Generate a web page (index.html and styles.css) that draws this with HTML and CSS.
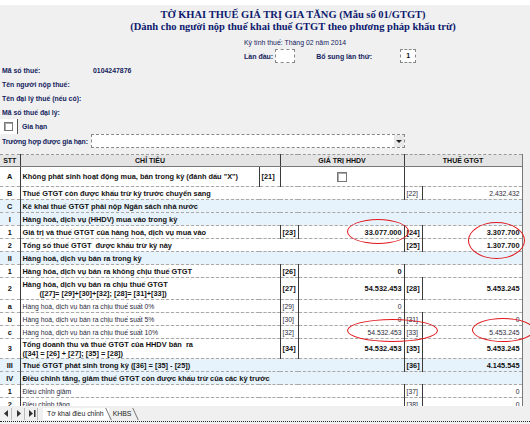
FILE: index.html
```html
<!DOCTYPE html>
<html lang="vi">
<head>
    <meta charset="UTF-8">
    <title>Tờ khai thuế GTGT</title>
    <link rel="stylesheet" href="styles.css">
</head>
<body>

<div class="sheet">
    <div class="topbar"></div>

    <div class="title">
        <div>TỜ KHAI THUẾ GIÁ TRỊ GIA TĂNG (Mẫu số 01/GTGT)</div>
        <div>(Dành cho người nộp thuế khai thuế GTGT theo phương pháp khấu trừ)</div>
    </div>

    <div class="period">Kỳ tính thuế: Tháng 02 năm 2014</div>
    <div class="times">
        <span class="lbl">Lần đầu:</span>
        <span class="box"></span>
        <span class="lbl extra">Bổ sung lần thứ:</span>
        <span class="box num">1</span>
    </div>

    <!-- thong tin nguoi nop thue -->
    <div class="info">
        <div class="line"><span class="key">Mã số thuế:</span><span class="val">0104247876</span></div>
        <div class="line"><span class="key">Tên người nộp thuế:</span></div>
        <div class="line"><span class="key">Tên đại lý thuế (nếu có):</span></div>
        <div class="line"><span class="key">Mã số thuế đại lý:</span></div>
        <div class="line chk-line"><span class="chk-wrap"><span class="chk"></span></span><span class="key">Gia hạn</span></div>
        <div class="line"><span class="key">Trường hợp được gia hạn:</span>
            <span class="select"><span class="arrow"></span></span>
        </div>
    </div>

    <table class="grid">
        <colgroup>
            <col style="width:20px">
            <col style="width:239px">
            <col style="width:21px">
            <col style="width:18px">
            <col style="width:106px">
            <col style="width:18px">
            <col style="width:100px">
        </colgroup>
        <tr class="hdr">
            <th>STT</th>
            <th colspan="2">CHỈ TIÊU</th>
            <th colspan="2">GIÁ TRỊ HHDV</th>
            <th colspan="2">THUẾ GTGT</th>
        </tr>
        <tr class="r ra">
            <td class="stt">A</td>
            <td>Không phát sinh hoạt động mua, bán trong kỳ (đánh dấu "X")</td>
            <td class="code">[21]</td>
            <td colspan="2" class="mid"><span class="chk"></span></td>
            <td colspan="2"></td>
        </tr>
        <tr class="r">
            <td class="stt">B</td>
            <td colspan="4">Thuế GTGT còn được khấu trừ kỳ trước chuyển sang</td>
            <td class="code light">[22]</td>
            <td class="num light">2.432.432</td>
        </tr>
        <tr class="r blue">
            <td class="stt">C</td>
            <td colspan="6">Kê khai thuế GTGT phải nộp Ngân sách nhà nước</td>
        </tr>
        <tr class="r blue">
            <td class="stt">I</td>
            <td colspan="6">Hàng hoá, dịch vụ (HHDV) mua vào trong kỳ</td>
        </tr>
        <tr class="r">
            <td class="stt">1</td>
            <td colspan="2">Giá trị và thuế GTGT của hàng hoá, dịch vụ mua vào</td>
            <td class="code">[23]</td>
            <td class="num">33.077.000</td>
            <td class="code">[24]</td>
            <td class="num">3.307.700</td>
        </tr>
        <tr class="r">
            <td class="stt">2</td>
            <td colspan="4">Tổng số thuế GTGT&nbsp; được khấu trừ kỳ này</td>
            <td class="code">[25]</td>
            <td class="num">1.307.700</td>
        </tr>
        <tr class="r blue">
            <td class="stt">II</td>
            <td colspan="6">Hàng hoá, dịch vụ bán ra trong kỳ</td>
        </tr>
        <tr class="r">
            <td class="stt">1</td>
            <td colspan="2">Hàng hóa, dịch vụ bán ra không chịu thuế GTGT</td>
            <td class="code">[26]</td>
            <td class="num">0</td>
            <td colspan="2"></td>
        </tr>
        <tr class="r r2">
            <td class="stt">2</td>
            <td colspan="2">Hàng hóa, dịch vụ bán ra chịu thuế GTGT<br><span class="indent">([27]= [29]+[30]+[32]; [28]= [31]+[33])</span></td>
            <td class="code">[27]</td>
            <td class="num">54.532.453</td>
            <td class="code">[28]</td>
            <td class="num">5.453.245</td>
        </tr>
        <tr class="r thin">
            <td class="stt">a</td>
            <td colspan="2">Hàng hoá, dịch vụ bán ra chịu thuế suất 0%</td>
            <td class="code">[29]</td>
            <td class="num">0</td>
            <td colspan="2"></td>
        </tr>
        <tr class="r thin">
            <td class="stt">b</td>
            <td colspan="2">Hàng hoá, dịch vụ bán ra chịu thuế suất 5%</td>
            <td class="code">[30]</td>
            <td class="num">0</td>
            <td class="code">[31]</td>
            <td class="num">0</td>
        </tr>
        <tr class="r thin">
            <td class="stt">c</td>
            <td colspan="2">Hàng hoá, dịch vụ bán ra chịu thuế suất 10%</td>
            <td class="code">[32]</td>
            <td class="num">54.532.453</td>
            <td class="code">[33]</td>
            <td class="num">5.453.245</td>
        </tr>
        <tr class="r r3">
            <td class="stt">3</td>
            <td colspan="2">Tổng doanh thu và thuế GTGT của HHDV bán&nbsp; ra<br>([34] = [26] + [27]; [35] = [28])</td>
            <td class="code">[34]</td>
            <td class="num">54.532.453</td>
            <td class="code">[35]</td>
            <td class="num">5.453.245</td>
        </tr>
        <tr class="r blue">
            <td class="stt">III</td>
            <td colspan="4">Thuế GTGT phát sinh trong kỳ ([36] = [35] - [25])</td>
            <td class="code">[36]</td>
            <td class="num">4.145.545</td>
        </tr>
        <tr class="r blue">
            <td class="stt">IV</td>
            <td colspan="6">Điều chỉnh tăng, giảm thuế GTGT còn được khấu trừ của các kỳ trước</td>
        </tr>
        <tr class="r thin">
            <td class="stt">1</td>
            <td colspan="4">Điều chỉnh giảm</td>
            <td class="code">[37]</td>
            <td class="num">0</td>
        </tr>
        <tr class="r thin">
            <td class="stt">2</td>
            <td colspan="4">Điều chỉnh tăng</td>
            <td class="code">[38]</td>
            <td class="num">0</td>
        </tr>
    </table>
</div>

<!-- sheet tabs -->
<div class="tabs">
    <span class="nav">
        <svg width="6" height="7" viewBox="0 0 6 7"><path d="M5 0 L5 7 L1 3.5 Z" fill="#333"/></svg>
    </span>
    <span class="nav">
        <svg width="6" height="7" viewBox="0 0 6 7"><path d="M1 0 L1 7 L5 3.5 Z" fill="#333"/></svg>
    </span>
    <span class="nav">
        <svg width="8" height="7" viewBox="0 0 8 7"><path d="M1 0 L1 7 L5 3.5 Z" fill="#333"/><rect x="6" y="0" width="1.5" height="7" fill="#333"/></svg>
    </span>
    <span class="tab active">Tờ khai điều chỉnh</span>
    <span class="tab">KHBS</span>
</div>

<!-- red marks -->
<div class="mark m1"></div>
<div class="mark m2"></div>
<div class="mark m3"></div>
<div class="mark m4"></div>

</body>
</html>
```

FILE: styles.css
```css
body {
    margin: 0;
    width: 530px;
    height: 424px;
    overflow: hidden;
    position: relative;
    background-color: #f0f0f0;
    font-family: 'Liberation Sans', Arial, sans-serif;
    font-size: 7.4px;
    color: #14235e;
}

.sheet {
    height: 406px;
    overflow: hidden;
}

.topbar {
    height: 5px;
    background-color: #fff;
}

.title {
    margin-top: 4px;
    padding-left: 56px;
    text-align: center;
    font-family: 'Liberation Serif', 'Times New Roman', serif;
    font-weight: bold;
    font-size: 10.5px;
    line-height: 12px;
    color: #0d1a6e;
}

.period {
    margin-top: 4px;
    padding-left: 244px;
    line-height: 12px;
    font-size: 6.9px;
}

.times {
    display: flex;
    align-items: center;
    height: 14px;
    padding-left: 244px;
    font-weight: bold;
    font-size: 7px;
}

.times .lbl {
    white-space: nowrap;
}

.times .extra {
    margin-left: 21px;
    width: 82px;
}

.box {
    display: inline-block;
    width: 18px;
    height: 12px;
    margin-left: 2px;
    border: 1px dashed #888;
    background-color: #fff;
    text-align: center;
    line-height: 12px;
    color: #111;
}

.box.num {
    width: 14px;
}

.info .line {
    display: flex;
    align-items: center;
    height: 14px;
    padding-left: 2px;
    font-weight: bold;
    font-size: 6.9px;
    white-space: nowrap;
}

.info .key {
    width: 91px;
}

.info .line:last-child .key {
    width: 89px;
    letter-spacing: -0.1px;
}

.chk-line {
    height: 15px !important;
    padding-left: 0 !important;
}

.chk-line .key {
    margin-left: 4px;
}

.chk-wrap {
    display: inline-flex;
    align-items: center;
    justify-content: center;
    width: 17px;
    height: 15px;
    background-color: #fff;
    border-right: 1px solid #555;
}

.chk {
    display: inline-block;
    width: 7px;
    height: 7px;
    border: 1px solid #777;
    background-color: #fff;
    box-shadow: inset 1px 1px 0 #aaa;
}

.select {
    position: relative;
    width: 312px;
    height: 12px;
    border: 1px dashed #888;
    background-color: #fff;
}

.select .arrow {
    position: absolute;
    right: 0;
    top: 0;
    width: 10px;
    height: 12px;
    background-color: #e8e8e8;
}

.select .arrow::after {
    content: "";
    position: absolute;
    left: 2px;
    top: 5px;
    border-left: 3px solid transparent;
    border-right: 3px solid transparent;
    border-top: 3px solid #222;
}

/* bang chi tieu */
.grid {
    margin-top: 6px;
    width: 522px;
    table-layout: fixed;
    border-collapse: collapse;
    color: #111;
    font-weight: bold;
}

.grid th,
.grid td {
    padding: 0 2px;
    border-left: 1px solid #3a3a3a;
    border-bottom: 1px dashed #a8a8a8;
    white-space: nowrap;
    overflow: hidden;
    line-height: 9px;
    background-color: #fff;
}

.grid td:first-child,
.grid th:first-child {
    border-left: none;
}

.grid tr > :last-child {
    border-right: 1px solid #777;
}

.grid .hdr th {
    height: 11px;
    background-color: #e4e4e4;
    border-top: 1px dashed #999;
    border-bottom: 1px solid #777;
    font-size: 7px;
}

.grid .r td {
    height: 12px;
}

.grid .ra td {
    height: 19px;
}

.grid .r2 td {
    height: 21px;
}

.grid .r3 td {
    height: 19px;
}

.grid .blue td {
    background-color: #e6f3fc;
}

.grid .stt {
    text-align: center;
}

.grid .code {
    padding: 0 1px 0 2px;
}

.grid .num {
    text-align: right;
}

.grid .mid {
    text-align: center;
}

.grid .mid .chk {
    width: 8px;
    height: 8px;
    vertical-align: middle;
}

.grid .thin td:not(.stt) {
    font-weight: normal;
    font-size: 6.8px;
    color: #2a2a3a;
}

.grid .light {
    font-weight: normal;
    font-size: 6.8px;
    color: #2a2a3a;
}

.indent {
    padding-left: 17px;
}

.tabs {
    display: flex;
    align-items: center;
    height: 15px;
    border-bottom: 1px dotted #222;
    background-color: #f0f0f0;
    padding-left: 1px;
    font-size: 6.9px;
}

.nav {
    display: inline-flex;
    align-items: center;
    justify-content: center;
    width: 10px;
    height: 12px;
    border-right: 1px solid #bbb;
    margin-right: 2px;
}

.tab {
    position: relative;
    padding: 0 5px 0 4px;
    height: 12px;
    line-height: 12px;
    color: #222;
}

.tab.active {
    margin-left: 3px;
    background-color: #fff;
}

.tab::after {
    content: "";
    position: absolute;
    right: 0;
    top: 0;
    height: 12px;
    border-left: 1px solid #777;
    transform: skewX(25deg);
}

.mark {
    position: absolute;
    border: 1px solid #e2161b;
    border-radius: 50%;
}

.m1 {
    left: 347px;
    top: 219px;
    width: 60px;
    height: 23px;
}

.m2 {
    left: 468px;
    top: 222px;
    width: 55px;
    height: 35px;
}

.m3 {
    left: 347px;
    top: 319px;
    width: 89px;
    height: 21px;
}

.m4 {
    left: 472px;
    top: 318px;
    width: 60px;
    height: 22px;
}
```
